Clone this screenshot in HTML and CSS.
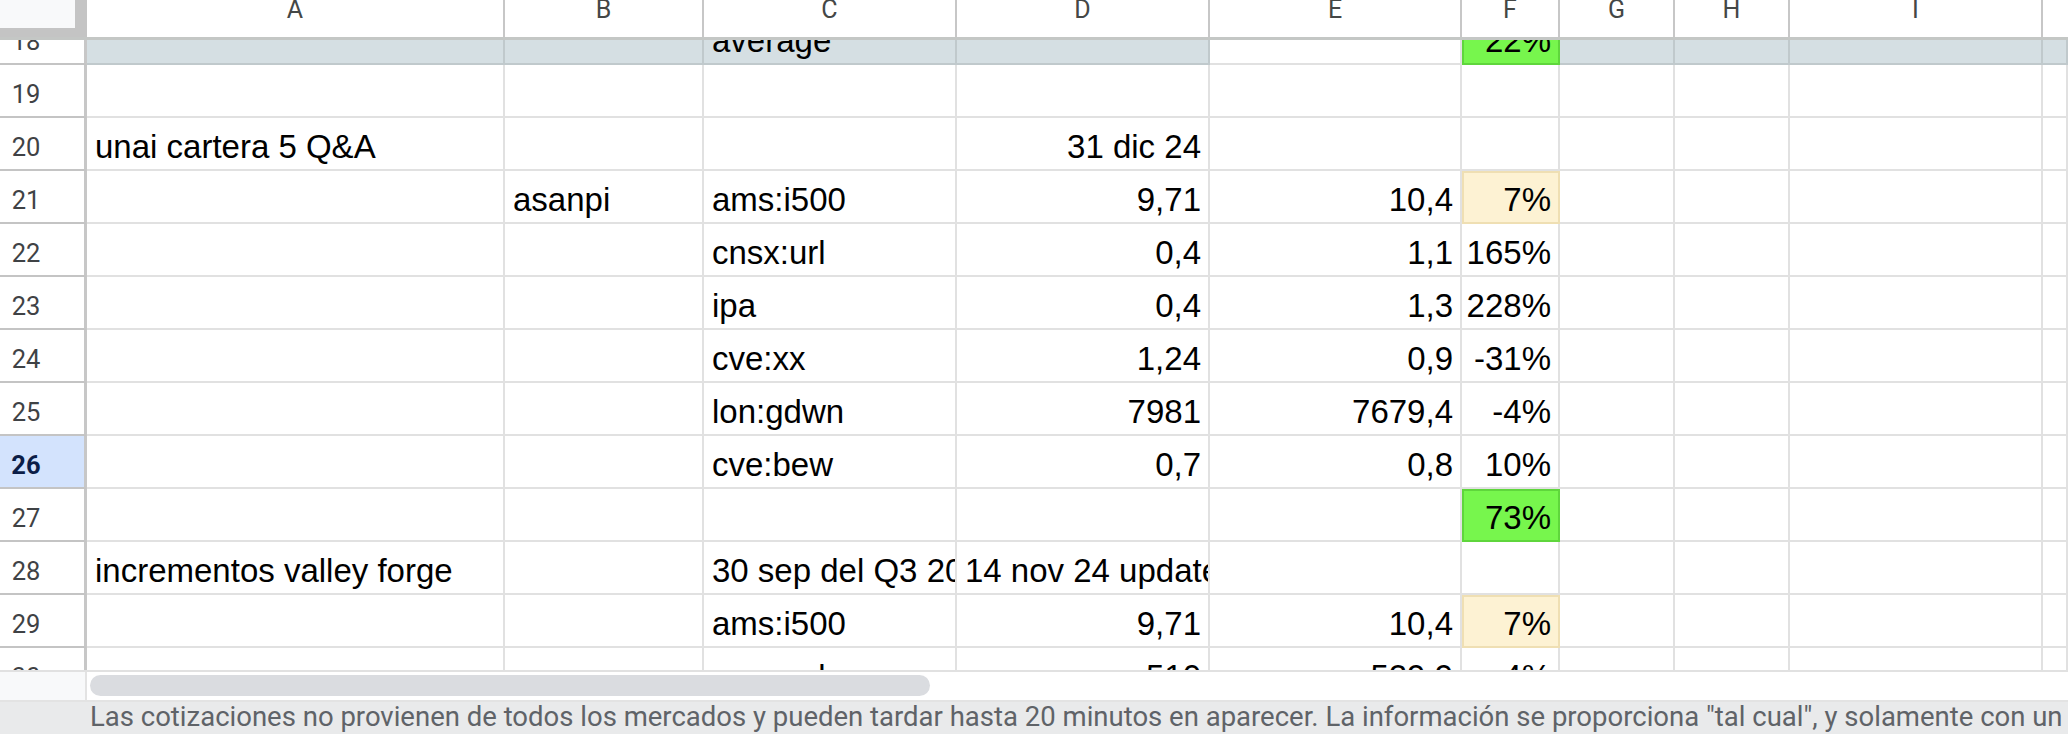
FILE: index.html
```html
<!DOCTYPE html>
<html lang="es">
<head>
<meta charset="utf-8">
<title>Hoja</title>
<link rel="stylesheet" href="styles.css">
</head>
<body>
<div class="sheet">
  <div class="colhead">
    <div class="corner"><div class="corner-box"></div></div>
    <div class="ch">A</div>
    <div class="ch">B</div>
    <div class="ch">C</div>
    <div class="ch">D</div>
    <div class="ch">E</div>
    <div class="ch">F</div>
    <div class="ch">G</div>
    <div class="ch">H</div>
    <div class="ch">I</div>
    <div class="ch last"></div>
  </div>

  <div class="viewport">
    <div class="rows">
      <div class="row band">
        <div class="rh">18</div>
        <div class="c"></div><div class="c"></div><div class="c">average</div><div class="c"></div>
        <div class="c plain"></div><div class="c num green">22%</div>
        <div class="c"></div><div class="c"></div><div class="c"></div><div class="c"></div>
      </div>
      <div class="row">
        <div class="rh">19</div>
        <div class="c"></div><div class="c"></div><div class="c"></div><div class="c"></div><div class="c"></div><div class="c"></div><div class="c"></div><div class="c"></div><div class="c"></div><div class="c"></div>
      </div>
      <div class="row">
        <div class="rh">20</div>
        <div class="c">unai cartera 5 Q&amp;A</div><div class="c"></div><div class="c"></div><div class="c num">31 dic 24</div><div class="c"></div><div class="c"></div><div class="c"></div><div class="c"></div><div class="c"></div><div class="c"></div>
      </div>
      <div class="row">
        <div class="rh">21</div>
        <div class="c"></div><div class="c">asanpi</div><div class="c">ams:i500</div><div class="c num">9,71</div><div class="c num">10,4</div><div class="c num yellow">7%</div><div class="c"></div><div class="c"></div><div class="c"></div><div class="c"></div>
      </div>
      <div class="row">
        <div class="rh">22</div>
        <div class="c"></div><div class="c"></div><div class="c">cnsx:url</div><div class="c num">0,4</div><div class="c num">1,1</div><div class="c num">165%</div><div class="c"></div><div class="c"></div><div class="c"></div><div class="c"></div>
      </div>
      <div class="row">
        <div class="rh">23</div>
        <div class="c"></div><div class="c"></div><div class="c">ipa</div><div class="c num">0,4</div><div class="c num">1,3</div><div class="c num">228%</div><div class="c"></div><div class="c"></div><div class="c"></div><div class="c"></div>
      </div>
      <div class="row">
        <div class="rh">24</div>
        <div class="c"></div><div class="c"></div><div class="c">cve:xx</div><div class="c num">1,24</div><div class="c num">0,9</div><div class="c num">-31%</div><div class="c"></div><div class="c"></div><div class="c"></div><div class="c"></div>
      </div>
      <div class="row">
        <div class="rh">25</div>
        <div class="c"></div><div class="c"></div><div class="c">lon:gdwn</div><div class="c num">7981</div><div class="c num">7679,4</div><div class="c num">-4%</div><div class="c"></div><div class="c"></div><div class="c"></div><div class="c"></div>
      </div>
      <div class="row">
        <div class="rh sel">26</div>
        <div class="c"></div><div class="c"></div><div class="c">cve:bew</div><div class="c num">0,7</div><div class="c num">0,8</div><div class="c num">10%</div><div class="c"></div><div class="c"></div><div class="c"></div><div class="c"></div>
      </div>
      <div class="row">
        <div class="rh">27</div>
        <div class="c"></div><div class="c"></div><div class="c"></div><div class="c"></div><div class="c"></div><div class="c num green">73%</div><div class="c"></div><div class="c"></div><div class="c"></div><div class="c"></div>
      </div>
      <div class="row">
        <div class="rh">28</div>
        <div class="c">incrementos valley forge</div><div class="c"></div><div class="c">30 sep del Q3 2024</div><div class="c">14 nov 24 update</div><div class="c"></div><div class="c"></div><div class="c"></div><div class="c"></div><div class="c"></div><div class="c"></div>
      </div>
      <div class="row">
        <div class="rh">29</div>
        <div class="c"></div><div class="c"></div><div class="c">ams:i500</div><div class="c num">9,71</div><div class="c num">10,4</div><div class="c num yellow">7%</div><div class="c"></div><div class="c"></div><div class="c"></div><div class="c"></div>
      </div>
      <div class="row">
        <div class="rh">30</div>
        <div class="c"></div><div class="c"></div><div class="c">cnsx:url</div><div class="c num">510</div><div class="c num">529,9</div><div class="c num">4%</div><div class="c"></div><div class="c"></div><div class="c"></div><div class="c"></div>
      </div>
    </div>
  </div>

  <div class="hscroll">
    <div class="hs-corner"></div>
    <div class="hs-track"><div class="thumb"></div></div>
  </div>

  <div class="footer">Las cotizaciones no provienen de todos los mercados y pueden tardar hasta 20 minutos en aparecer. La información se proporciona "tal cual", y solamente con un objetivo informativo, no para operar ni como asesoramiento.</div>
</div>
</body>
</html>
```

FILE: styles.css
```css
* { box-sizing: border-box; }

html, body {
  margin: 0;
  padding: 0;
  background: #ffffff;
}

body {
  width: 2068px;
  height: 734px;
  overflow: hidden;
}

.sheet {
  display: flex;
  flex-direction: column;
  width: 2068px;
  height: 734px;
}

/* column header */
.colhead {
  display: grid;
  grid-template-columns: 87px 418px 199px 253px 253px 252px 98px 115px 115px 253px 1fr;
  height: 40px;
  border-bottom: 3px solid #c4c7c5;
  flex: none;
}

.corner {
  background: #c4c4c4;
  padding: 0 12px 9px 0;
}

.corner-box {
  width: 75px;
  height: 28px;
  background: #f8f9fa;
}

.ch {
  font-family: Roboto, "Liberation Sans", sans-serif;
  font-size: 25px;
  line-height: 20px;
  color: #444746;
  text-align: center;
  border-right: 2px solid #c7c7c7;
}

.ch.last { border-right: none; }

/* grid body */
.viewport {
  height: 630px;
  overflow: hidden;
  flex: none;
}

.rows {
  margin-top: -28px;
}

.row {
  display: grid;
  grid-template-columns: 87px 418px 199px 253px 253px 252px 98px 115px 115px 253px 1fr;
  height: 53px;
}

.rh {
  display: flex;
  align-items: flex-end;
  justify-content: center;
  padding: 0 32px 10px 0;
  font-family: Roboto, "Liberation Sans", sans-serif;
  font-size: 25.5px;
  line-height: 24px;
  color: #3f4245;
  border-right: 3px solid #c7c7c7;
  border-bottom: 2px solid #c4c4c4;
  background: #ffffff;
}

.rh.sel {
  background: #d3e3fd;
  color: #0b1d47;
  font-weight: 700;
}

.c {
  display: flex;
  align-items: flex-end;
  padding: 0 7px 3px 8px;
  font-family: "Liberation Sans", Arial, sans-serif;
  font-size: 33px;
  line-height: 38px;
  color: #000000;
  white-space: nowrap;
  overflow: hidden;
  border-right: 2px solid #e1e1e1;
  border-bottom: 2px solid #e1e1e1;
}

.c.num { justify-content: flex-end; }

.band .c {
  background: #d5dfe3;
  border-color: #c0c9cc;
}

.band .c.plain {
  background: #ffffff;
  border-color: #e1e1e1;
}

.c.green,
.band .c.green {
  background: #77f64d;
  border: 2px solid #5fd63c;
}

.c.yellow {
  background: #fdf2d3;
  border: 2px solid #efdfb3;
}

/* horizontal scrollbar */
.hscroll {
  display: flex;
  height: 32px;
  border-top: 2px solid #e1e1e1;
  border-bottom: 2px solid #e3e3e3;
  flex: none;
}

.hs-corner {
  width: 87px;
  background: #f8f9fa;
  border-right: 2px solid #e3e3e3;
}

.hs-track {
  flex: 1;
  padding: 3px 0 0 3px;
}

.thumb {
  width: 840px;
  height: 21px;
  border-radius: 11px;
  background: #dadce0;
}

/* footer */
.footer {
  flex: none;
  height: 32px;
  background: #e9eaeb;
  padding-left: 90px;
  font-family: Roboto, "Liberation Sans", sans-serif;
  font-size: 27.5px;
  line-height: 30px;
  color: #5f6368;
  white-space: nowrap;
  overflow: hidden;
}
```
